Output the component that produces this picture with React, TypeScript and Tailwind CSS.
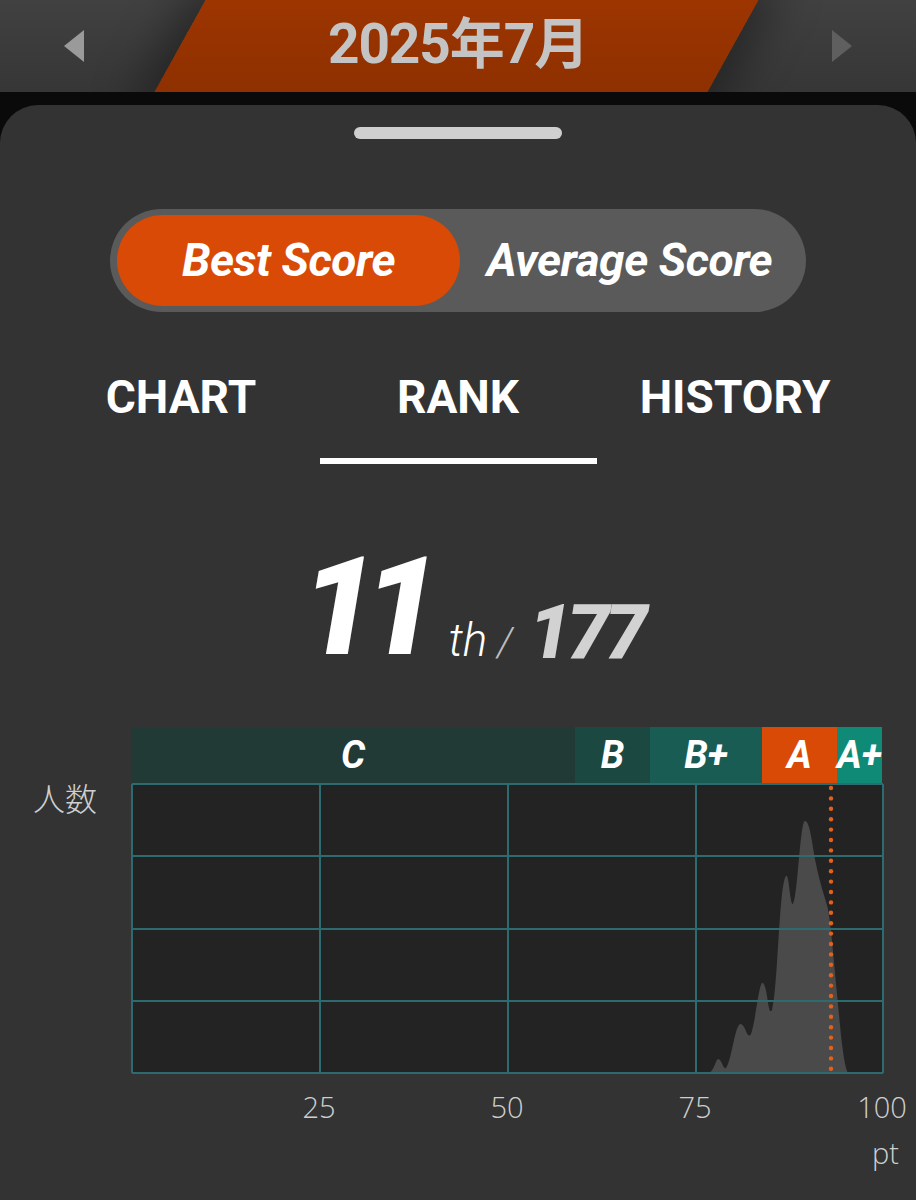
import type { ReactNode } from 'react';

const HEAD = { fontFamily: 'Roboto, "Noto Sans CJK JP", sans-serif' };
const LIGHT = { fontFamily: '"Open Sans", "Noto Sans CJK JP", sans-serif' };

const grades = [
  { label: 'C', width: 'w-[444px]', bg: 'bg-[#213a36]' },
  { label: 'B', width: 'w-[75px]', bg: 'bg-[#1c4842]' },
  { label: 'B+', width: 'w-[112px]', bg: 'bg-[#195c54]' },
  { label: 'A', width: 'w-[75px]', bg: 'bg-[#d84a06]' },
  { label: 'A+', width: 'w-[45px]', bg: 'bg-[#0f8a77]' },
];

const Triangle = ({ dir, color }: { dir: 'left' | 'right'; color: string }) => (
  <svg width="24" height="32" viewBox="0 0 24 32">
    <path d={dir === 'left' ? 'M22 0 L2 16 L22 32 Z' : 'M2 0 L22 16 L2 32 Z'} fill={color} />
  </svg>
);

const Tab = ({ children, active }: { children: ReactNode; active?: boolean }) => (
  <div className="flex w-[277px] flex-col items-center">
    <div className="h-[84px] text-[46px] font-bold leading-none text-white" style={HEAD}>
      {children}
    </div>
    <div className={`h-[6px] w-[277px] ${active ? 'bg-white' : 'bg-transparent'}`} />
  </div>
);

// distribution curve in chart coordinates (0..751 x 0..289)
const AREA =
  'M577 289 C582 287 584 275 586 275 C590 275 591 286 594 284 C600 276 603 238 609 240 C614 242 615 256 619 250 C624 236 627 196 631 199 C636 204 636 234 640 226 C646 205 647 100 654 92 C657 88 658 122 661 120 C666 112 668 37 673 37 C678 37 680 60 684 80 C688 100 692 110 696 125 C700 150 702 180 705 210 C708 240 711 280 716 289 Z';

const Chart = () => {
  const dots = Array.from({ length: 28 }, (_, i) => 4 + i * 10.4);
  return (
    <svg width="753" height="291" viewBox="-1 -1 753 291" className="block">
      <rect x="0" y="0" width="751" height="289" fill="#232323" />
      <path d={AREA} fill="#4a4a4a" />
      {[0, 188, 376, 564, 751].map((x) => (
        <line key={x} x1={x} y1="0" x2={x} y2="289" stroke="#2c6c70" strokeWidth="2" />
      ))}
      {[0, 72, 145, 217, 289].map((y) => (
        <line key={y} x1="0" y1={y} x2="751" y2={y} stroke="#2c6c70" strokeWidth="2" />
      ))}
      {dots.map((y) => (
        <circle key={y} cx="699" cy={y} r="2.2" fill="#e2621c" />
      ))}
    </svg>
  );
};

export default function App() {
  return (
    <div className="h-[1200px] w-[916px] overflow-hidden bg-[#0a0a0a]">
      {/* month header */}
      <div className="relative flex h-[92px] items-center justify-between overflow-hidden bg-gradient-to-b from-[#414141] to-[#363636] px-[62px]">
        <div className="absolute left-[180px] top-0 h-[92px] w-[553px] skew-x-[-29deg] bg-gradient-to-b from-[#9d3500] to-[#8e3000] shadow-[0_0_40px_18px_rgba(0,0,0,0.35)]" />
        <Triangle dir="left" color="#9a9a9a" />
        <div className="relative -mt-[4px] text-[55px] font-bold leading-none tracking-[-0.02em] text-[#c4c4c4]" style={HEAD}>
          2025年7月
        </div>
        <Triangle dir="right" color="#5f5f5f" />
      </div>

      {/* sheet */}
      <div className="mt-[13px] h-[1095px] rounded-t-[38px] bg-[#333333] pt-[22px]">
        <div className="mx-auto h-[12px] w-[208px] rounded-full bg-[#cfcfcf]" />

        <div className="mx-auto mt-[70px] flex h-[103px] w-[696px] items-center rounded-full bg-[#5a5a5a] px-[7px]">
          <div className="flex h-[91px] w-[343px] items-center justify-center rounded-full bg-[#d84a06] text-[46px] font-bold italic tracking-[-0.01em] text-white" style={HEAD}>
            Best Score
          </div>
          <div className="flex flex-1 items-center justify-center text-[46px] font-bold italic tracking-[-0.01em] text-white" style={HEAD}>
            Average Score
          </div>
        </div>

        <div className="mt-[62px] flex justify-center">
          <Tab>CHART</Tab>
          <Tab active>RANK</Tab>
          <Tab>HISTORY</Tab>
        </div>

        {/* rank */}
        <div className="mt-[69px] flex h-[130px] items-end justify-center pl-[28px]" style={HEAD}>
          <span className="text-[136px] font-black italic leading-[0.8] tracking-[-0.1em] text-white">11</span>
          <span className="ml-[22px] text-[46px] font-light italic leading-none text-white">th</span>
          <span className="ml-[10px] text-[40px] font-light italic leading-none text-[#bdbdbd]">/</span>
          <span className="ml-[16px] text-[76px] font-black italic leading-[0.8] tracking-[-0.06em] text-[#d2d2d2]">177</span>
        </div>

        {/* distribution chart */}
        <div className="mt-[64px] flex">
          <div className="w-[131px] pt-[56px] pl-[33px] text-[32px] font-light leading-none text-[#cfcfcf]" style={LIGHT}>
            人数
          </div>
          <div className="w-[753px]">
            <div className="flex h-[56px] w-[751px]">
              {grades.map((g) => (
                <div
                  key={g.label}
                  className={`${g.width} ${g.bg} flex items-center justify-center text-[38px] font-bold italic text-white`}
                  style={HEAD}
                >
                  {g.label}
                </div>
              ))}
            </div>
            <Chart />
            <div className="relative h-[40px] text-[29px] font-light leading-none text-[#cfcfcf]" style={LIGHT}>
              <span className="absolute left-[188px] top-[18px] -translate-x-1/2">25</span>
              <span className="absolute left-[376px] top-[18px] -translate-x-1/2">50</span>
              <span className="absolute left-[564px] top-[18px] -translate-x-1/2">75</span>
              <span className="absolute left-[751px] top-[18px] -translate-x-1/2">100</span>
            </div>
            <div className="mt-[24px] w-[768px] text-right text-[29px] font-light leading-none text-[#cfcfcf]" style={LIGHT}>
              pt
            </div>
          </div>
        </div>
      </div>
    </div>
  );
}
